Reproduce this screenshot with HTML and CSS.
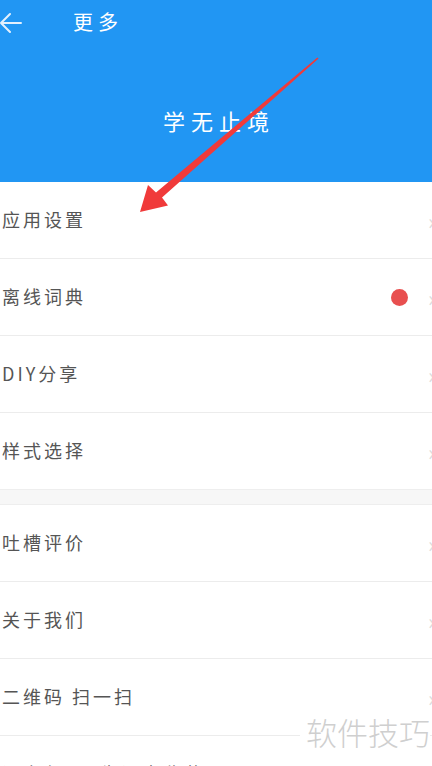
FILE: index.html
```html
<!DOCTYPE html>
<html lang="zh-CN">
<head>
    <meta charset="UTF-8">
    <meta name="viewport" content="width=device-width, initial-scale=1.0">
    <title>更多</title>
    <link rel="stylesheet" href="styles.css">
</head>
<body>
    <div class="header">
        <div class="toolbar">
            <svg class="back" width="24" height="24" viewBox="0 0 24 24">
                <path d="M22 12H2M11 3L2 12l9 9" fill="none" stroke="#e3f0fd" stroke-width="2" stroke-linecap="round" stroke-linejoin="round"/>
            </svg>
            <span class="title">更多</span>
        </div>
        <div class="slogan">学无止境</div>
    </div>

    <div class="group">
        <div class="item"><span class="label">应用设置</span><span class="chev">›</span></div>
        <div class="item"><span class="label">离线词典</span><span class="dot"></span><span class="chev">›</span></div>
        <div class="item"><span class="label">DIY分享</span><span class="chev">›</span></div>
        <div class="item"><span class="label">样式选择</span><span class="chev">›</span></div>
    </div>
    <div class="spacer"></div>
    <div class="group">
        <div class="item"><span class="label">吐槽评价</span><span class="chev">›</span></div>
        <div class="item"><span class="label">关于我们</span><span class="chev">›</span></div>
        <div class="item"><span class="label">二维码 扫一扫</span><span class="chev">›</span></div>
        <div class="item"><span class="label">语言包 · 生词本收藏</span><span class="chev">›</span></div>
    </div>

    <!-- annotation arrow drawn over the page -->
    <svg class="pointer" width="432" height="240" viewBox="0 0 432 240">
        <polygon points="317.4,57.4 156,192.5 148,185 140,212 168,205.5 162,197.5 318.6,58.6" fill="#f03a3a"/>
    </svg>

    <div class="watermark">软件技巧</div>
</body>
</html>
```

FILE: styles.css
```css
body {
    margin: 0;
    font-family: "Noto Sans CJK SC", "Noto Sans", sans-serif;
    background-color: #fff;
    color: #555;
    width: 432px;
    height: 766px;
    overflow: hidden;
    position: relative;
}
.header {
    background-color: #2196f3;
    height: 182px;
    display: flex;
    flex-direction: column;
}
.toolbar {
    height: 46px;
    display: flex;
    align-items: center;
}
.back {
    margin-left: -1px;
    margin-top: -1px;
}
.title {
    margin-left: 50px;
    color: #fff;
    font-size: 20px;
    letter-spacing: 5px;
    margin-top: -4px;
}
.slogan {
    color: #fff;
    font-size: 22px;
    letter-spacing: 6px;
    text-align: center;
    padding-left: 6px;
    margin-top: 58px;
}
.group {
    background-color: #fff;
}
.item {
    height: 76px;
    border-bottom: 1px solid #ececec;
    display: flex;
    align-items: center;
    padding-left: 2px;
}
.group .item:last-child {
    border-bottom: none;
}
.label {
    flex: 1;
    font-size: 18px;
    letter-spacing: 3px;
    color: #555;
    margin-top: -2px;
}
.dot {
    width: 17px;
    height: 17px;
    border-radius: 50%;
    background-color: #e84f4f;
    margin-right: 20px;
}
.chev {
    color: #dcdcdc;
    font-size: 22px;
    width: 6px;
    overflow: hidden;
    margin-right: -2px;
}
.spacer {
    height: 14px;
    background-color: #f7f7f7;
    border-top: 1px solid #eee;
    border-bottom: 1px solid #eee;
}
.pointer {
    position: absolute;
    left: 0;
    top: 0;
}
.watermark {
    position: absolute;
    right: 2px;
    top: 712px;
    font-size: 31px;
    color: #cfcfcf;
    background-color: #fff;
    padding-left: 6px;
    line-height: 40px;
    font-weight: 300;
}
```
